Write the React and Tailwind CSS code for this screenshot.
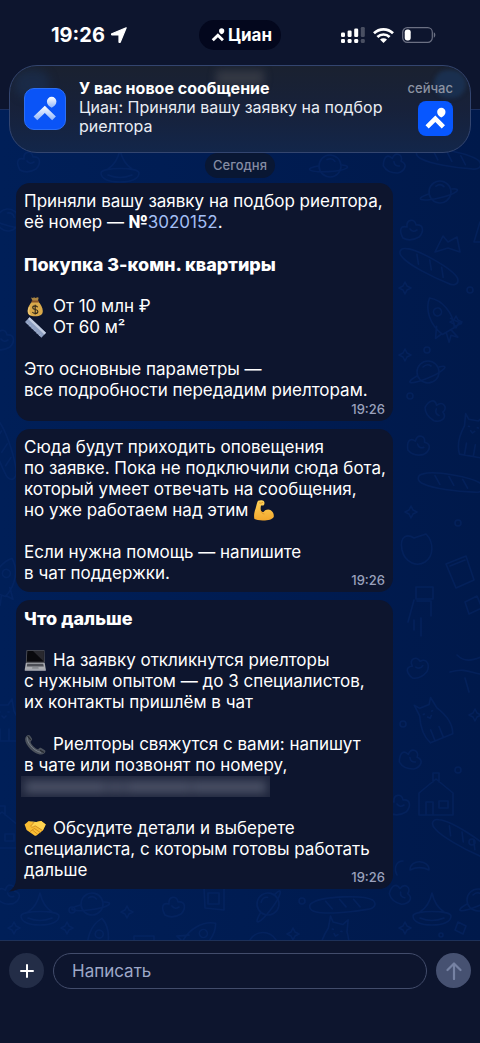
import React from 'react';

function CianMark({ className, from = '#ffffff', to = '#ffffff', id }) {
  return (
    <svg viewBox="0 0 42 42" className={className} aria-hidden="true">
      <defs>
        <linearGradient id={id} x1="0" y1="0" x2="0" y2="1">
          <stop offset="0" stopColor={from} />
          <stop offset="1" stopColor={to} />
        </linearGradient>
      </defs>
      <path
        fill={`url(#${id})`}
        d="M28 8.200a5 5 0 0 1 5 5c0 3-2.200 5-5 6.600-2.800-1.600-5-3.600-5-6.600a5 5 0 0 1 5-5z"
      />
      <path fill={`url(#${id})`} d="M20.800 17.500 32.400 29l-3.900 3.900-7.700-7.600-7.900 7.600L9 29z" />
    </svg>
  );
}

function MoneyBag() {
  return (
    <svg viewBox="0 0 22 21" role="img" aria-label="Мешок денег" className="mr-[7px] inline-block h-[21px] w-[22px] align-top">
      <path d="M7 1.500 9 2l1-.8 1.600.8 1.700-.8 1.400.6L13.800 5H8.600z" fill="#a98442" />
      <path d="M8.300 5.500h5.800c2.600 2.500 4.700 6 4.700 9.500 0 3.800-2.400 5.300-7.600 5.300s-7.600-1.500-7.600-5.300c0-3.500 2.100-7 4.700-9.500z" fill="#d9a94b" />
      <path d="M5.500 11c-1.200 3-1 6.500 1 8" stroke="#efc873" strokeWidth="1.400" fill="none" />
      <rect x="7.500" y="4.500" width="7.400" height="1.900" rx=".9" fill="#8a5428" />
      <path d="M13.700 11.200c-.5-.9-1.400-1.300-2.500-1.300-1.500 0-2.500.7-2.500 1.800 0 2.600 5.200 1.100 5.200 3.700 0 1.200-1.100 2-2.700 2-1.300 0-2.300-.5-2.800-1.500M11.200 8.700v9.900" stroke="#33291a" strokeWidth="1.100" fill="none" />
    </svg>
  );
}

function Ruler() {
  return (
    <svg viewBox="0 0 22 21" role="img" aria-label="Линейка" className="mr-[7px] inline-block h-[21px] w-[22px] align-top">
      <path d="M5.600.2 22 15.800 17.400 20.800 1 5z" fill="#8fa0c2" />
      <path d="M5.600.2 22 15.800 20.500 17.400 4.100 1.900z" fill="#c3cde2" />
      <path d="m2.800 7 1.300-1.400m1.200 3.800 1.300-1.400m1.200 3.800 1.300-1.400m1.200 3.800 1.300-1.400m1.200 3.800 1.300-1.400m1.200 3.600 1.300-1.400" stroke="#c0cae0" strokeWidth=".6" />
    </svg>
  );
}

function Biceps() {
  return (
    <svg viewBox="0 0 22 21" role="img" aria-label="Сила" className="ml-[5px] inline-block h-[21px] w-[22px] align-top">
      <defs>
        <linearGradient id="arm" x1="0" y1="0" x2="0" y2="1">
          <stop offset="0" stopColor="#ffd45c" />
          <stop offset="1" stopColor="#f3a82c" />
        </linearGradient>
      </defs>
      <path
        d="M5 .8C6.800-.1 9.800-.1 10.800 1c.8.900.9 2.600.3 3.700-.5.900-2.100 1-3.100.8-.5 2.200-.5 4.200.2 5.800.8.8 1.700 1 2.600.5 1.500-2.400 4.800-2.900 7-1.500 2.300 1.500 3.200 4 3 6.200-.3 2.100-4 3.700-8.800 3.900C7 20.700 3.500 20 1.300 18.800c-.6-3.700.1-7 1.300-10.200C3.400 6 3.700 2.800 5 .8z"
        fill="url(#arm)"
      />
      <path d="M6.300 2.900c1.200.5 2.500.4 3.500-.6M8.200 11.300c.4 1.600 1.400 2.500 2.800 2.600" stroke="#d98b20" strokeWidth=".8" fill="none" strokeLinecap="round" />
    </svg>
  );
}

function Laptop() {
  return (
    <svg viewBox="0 0 22 21" role="img" aria-label="Ноутбук" className="mr-[7px] inline-block h-[21px] w-[22px] align-top">
      <path d="M2.500.2h18l.2 12.700H1.800z" fill="#55565b" />
      <path d="M3.300 1h16.500v10.800H2.700z" fill="#09090d" />
      <path d="m9 1 10.800 10.400V1z" fill="#29292f" />
      <path d="M1.800 12.900h18.900l1.100 6.400H.8z" fill="#a9abb0" />
      <path d="M3.200 13.700h16l.6 2.700h-17z" fill="#4c4e55" />
      <path d="M8.400 17h6l.3 1.800H8z" fill="#888b91" />
      <path d="M.8 19.300h21v1.300H.8z" fill="#d5d6d9" />
    </svg>
  );
}

function Receiver() {
  return (
    <svg viewBox="0 0 22 21" role="img" aria-label="Телефон" className="mr-[7px] inline-block h-[21px] w-[22px] align-top">
      <path
        d="M2.200 2.200C3.500.9 5 .4 5.900 1.500l2 3.100c.6 1-.1 2-1.200 2.800-.7.600 1 3.400 2.900 5.200 1.800 1.700 4 3.100 4.700 2.600.9-1 1.800-1.800 2.900-1.200l3.700 2.200c1 .8.600 2.200-.8 3.400-2.100 1.700-5.500 1.100-9-.8-3.500-2-6.700-5.200-8.600-8.700C.8 7 .6 4 2.200 2.200z"
        fill="#4b515b"
      />
      <path d="M3.700 2.400c-1.200 2.400.4 6.100 2.800 9 2.700 3.400 6.400 6.300 10.400 7" stroke="#7b828c" strokeWidth=".9" fill="none" />
      <path d="m3.600 2.200 3.100 3.700M16 16.200l3.900 2.200" stroke="#23272e" strokeWidth="1.200" />
    </svg>
  );
}

function Handshake() {
  return (
    <svg viewBox="0 0 22 21" role="img" aria-label="Рукопожатие" className="mr-[7px] inline-block h-[21px] w-[22px] align-top">
      <path d="M.6 6.500 4.700 3l5.200 1.500L12.300 4l4.900-1L21.700 6.600l-2.900 6-6.700 5.100c-.7.400-1.400 0-2-.5L2.600 11.900z" fill="#f9bd33" />
      <path d="m4.700 3 5.200 1.500-3.300 3.700c.8 1.300 2.800 1.200 4.500-.4l7.700 4.800 2.900-6L17.200 3l-4.900 1z" fill="#ffd34f" />
      <path d="m9.900 4.500-3.300 3.700c.8 1.300 2.800 1.200 4.500-.4l7.500 4.700M10.500 10.500l5.700 4M8.700 12.200l4.800 4M6.500 13.300l3-2.200" stroke="#c9821c" strokeWidth=".8" fill="none" strokeLinecap="round" />
    </svg>
  );
}

function Planet({ x, y, r = 0 }) {
  return (
    <g transform={`translate(${x} ${y}) rotate(${r})`}>
      <circle r="11" />
      <path d="M-11 4c-14 8-6 9 11 2s22-14 11-11M-5-5q4-4 8-1" />
    </g>
  );
}
function Candy({ x, y, r = 0 }) {
  return (
    <g transform={`translate(${x} ${y}) rotate(${r})`}>
      <path d="M-10 8c-4-7-3-13 4-11-1-8 8-9 9-2 8-1 8 7 3 12-5 3-11 4-16 1zM-3-1q3 4 7 1" />
    </g>
  );
}
function Baguette({ x, y, r = 0 }) {
  return (
    <g transform={`translate(${x} ${y}) rotate(${r})`}>
      <path d="M-30-6c10-5 50-4 59 2 5 5 0 9-6 9-18 2-42 2-51-1-8-2-8-8-2-10zM-18-6l6 8M-4-7l6 8M10-6l6 8" />
    </g>
  );
}
function Rocket({ x, y, r = 0 }) {
  return (
    <g transform={`translate(${x} ${y}) rotate(${r})`}>
      <path d="M-7 15c-6-14-3-30 7-38 10 8 13 24 7 38zM-8 5l-7 10 8-1M8 5l7 10-8-1M-3 16l-2 9 5-5 5 5-2-9" />
      <circle cy="-7" r="4" />
    </g>
  );
}
function House({ x, y, r = 0 }) {
  return (
    <g transform={`translate(${x} ${y}) rotate(${r})`}>
      <path d="M-17-4 0-18l17 14v22h-34zM-10 18V5h7v13M3 4h9v7H3zM-3-15v-9h6v9" />
    </g>
  );
}
function Bowl({ x, y, r = 0 }) {
  return (
    <g transform={`translate(${x} ${y}) rotate(${r})`}>
      <path d="M-19 5c0-6 38-6 38 0s-8 9-19 9-19-3-19-9zM-12 1C-6-3-2-9 0-18c2 9 6 15 12 19M-12 7q12 5 24 0" />
    </g>
  );
}
function Cat({ x, y, r = 0 }) {
  return (
    <g transform={`translate(${x} ${y}) rotate(${r})`}>
      <path d="M-10-20l4 5h10l4-6 2 12c6 10 9 20 5 30h-24c-5-10-3-20 0-29zM-4 21V9M5 21V9M-5-8h1M4-8h1M-2-4l2 2 2-2" />
    </g>
  );
}
function Sparkle({ x, y }) {
  return <path d={`M${x} ${y - 6}l2 4 4 2-4 2-2 4-2-4-4-2 4-2z`} />;
}

function Wallpaper() {
  return (
    <svg
      viewBox="0 0 480 831"
      preserveAspectRatio="xMinYMin slice"
      className="absolute inset-0 h-full w-full text-[#0a2c70]"
      fill="none"
      stroke="currentColor"
      strokeWidth="1.600"
      strokeLinecap="round"
      strokeLinejoin="round"
      opacity=".4"
      aria-hidden="true"
    >
      <Candy x={30} y={52} />
      <Bowl x={120} y={58} />
      <Planet x={330} y={56} r={20} />
      <Candy x={396} y={54} r={30} />
      <Baguette x={450} y={50} r={10} />
      <Planet x={440} y={82} r={10} />
      <Candy x={413} y={120} />
      <path d="M435 142l8-16 5 6 9-5 3 15-12-4zM474 132l6-20M475 132h6" />
      <Baguette x={430} y={158} r={28} />
      <Rocket x={441} y={208} r={-30} />
      <Planet x={428} y={262} />
      <Candy x={437} y={302} r={60} />
      <Candy x={420} y={336} r={20} />
      <Cat x={472} y={325} r={10} />
      <Baguette x={452} y={374} r={8} />
      <path d="M402 440c-3-15 6-16 12-12l12-4c8 8 8 22-1 28-8 5-20 1-23-12zM446 454l20-8 8 24-18 8zM450 456l15-6" />
      <path d="M416 477h17v12h-17zM414 490l-6 22M417 491h14v15M414 510v10M421 508v18M465 492l12-6 5 12-13 6z" />
      <Candy x={419} y={557} r={-20} />
      <path d="M457 545c8 8 16 5 24 2M450 562c14-4 20 0 30 2M465 568l4 14" />
      <Cat x={431} y={610} r={-22} />
      <Candy x={412} y={650} r={30} />
      <House x={436} y={687} />
      <Candy x={400} y={695} />
      <Baguette x={462} y={730} r={30} />
      <path d="M397 765c-4-8 0-14 6-14M410 760c0-12 20-10 19 0-6-3-13-3-19 0z" />
      <Planet x={8} y={110} r={40} />
      <Candy x={4} y={230} />
      <Baguette x={2} y={340} r={70} />
      <Rocket x={4} y={470} r={20} />
      <Cat x={4} y={610} />
      <House x={2} y={720} />
      <Candy x={10} y={785} r={20} />
      <Bowl x={40} y={801} />
      <Planet x={92} y={794} r={15} />
      <Rocket x={98} y={831} r={10} />
      <Candy x={175} y={797} />
      <path d="M204 778h20v22l-19-2zM208 783h11v11h-11z" />
      <Planet x={268} y={794} r={-30} />
      <Baguette x={344} y={796} r={-4} />
      <Candy x={402} y={785} r={45} />
      <Bowl x={432} y={801} />
      <Planet x={478} y={790} />
      <Rocket x={198} y={828} r={50} />
      <Cat x={335} y={828} r={15} />
      <path d="M134 826h20v12h-20zM250 830c6-10 20-10 26 0M458 812l8 4-3 8-8-4z" />
      <Sparkle x={405} y={178} />
      <Sparkle x={405} y={245} />
      <Sparkle x={456} y={212} />
      <Sparkle x={411} y={402} />
      <Sparkle x={475} y={605} />
      <Sparkle x={14} y={818} />
      <Sparkle x={67} y={818} />
      <Sparkle x={127} y={802} />
      <Sparkle x={293} y={824} />
      <Sparkle x={405} y={818} />
      <circle cx="427" cy="240" r="3" />
      <circle cx="410" cy="286" r="3" />
      <circle cx="470" cy="180" r="3" />
      <circle cx="458" cy="413" r="3" />
      <circle cx="403" cy="614" r="3" />
      <circle cx="458" cy="660" r="3" />
      <circle cx="472" cy="732" r="3" />
      <circle cx="302" cy="791" r="3" />
      <circle cx="72" cy="800" r="3" />
      <circle cx="441" cy="825" r="2" />
    </svg>
  );
}

function StatusBar() {
  return (
    <div className="grid h-[70px] grid-cols-[1fr_82px_1fr] items-center text-white">
      <div className="flex items-center gap-[6px] pl-[51px]">
        <span className="text-[20px] font-bold leading-6">19:26</span>
        <svg viewBox="0 0 16 16" className="h-4 w-4" aria-hidden="true">
          <path d="M15.200.8 9.200 15.200Q8.400 16.200 8 14.800V8H1.200Q-.2 7.600.8 6.800z" fill="#fff" stroke="#fff" strokeWidth="1.200" strokeLinejoin="round" />
        </svg>
      </div>
      <div className="flex h-[30px] items-center justify-center rounded-full bg-[#03071d]">
        <CianMark id="mark-pill" className="-mx-px h-[22px] w-[22px]" />
        <span className="text-[17px] font-bold leading-6">Циан</span>
      </div>
      <div className="flex items-center justify-end gap-2 pr-[44px]">
        <svg viewBox="0 0 24 16" className="h-4 w-6" fill="#fff" aria-hidden="true">
          <rect x="0" y="12" width="4" height="4" rx="1.300" />
          <rect x="6.600" y="12" width="4" height="4" rx="1.300" />
          <rect x="13.200" y="12" width="4" height="4" rx="1.300" />
          <rect x="19.800" y="12" width="4" height="4" rx="1.300" opacity=".25" />
          <rect x="0" y="5.500" width="4" height="4.500" rx="1.300" />
          <rect x="6.600" y="3.500" width="4" height="6.500" rx="1.300" />
          <rect x="13.200" y="1.500" width="4" height="8.500" rx="1.300" />
          <rect x="19.800" y="0" width="4" height="10" rx="1.300" opacity=".25" />
        </svg>
        <svg viewBox="0 0 21 15" className="h-[15px] w-[21px]" fill="none" stroke="#fff" strokeWidth="2.700" aria-hidden="true">
          <path d="M1 5.300a13.500 13.500 0 0 1 19 0" />
          <path d="M4.400 9a8.700 8.700 0 0 1 12.200 0" />
          <path d="M10.500 15 7 11.600a5 5 0 0 1 7 0z" fill="#fff" stroke="none" />
        </svg>
        <svg viewBox="0 0 34 16" className="h-4 w-[34px]" aria-hidden="true">
          <rect x=".7" y=".7" width="29.600" height="14.600" rx="4.600" fill="none" stroke="#6b7083" strokeWidth="1.200" />
          <rect x="2.700" y="2.600" width="6" height="10.800" rx="2.600" fill="#fff" />
          <path d="M31.800 5.300c2 .7 2 4.700 0 5.400z" fill="#6b7083" />
        </svg>
      </div>
    </div>
  );
}

function Notification() {
  return (
    <section
      aria-label="Уведомление"
      className="absolute inset-x-[9px] top-[65px] z-10 flex h-[88px] items-center overflow-hidden rounded-[28px] border border-[#33456f] bg-linear-to-b from-[#1a2130] via-[#17213a] to-[#12264a] pl-[14px] pr-[17px]"
    >
      <div className="absolute left-1 top-1 h-7 w-9 rounded-full bg-[#1b3154] opacity-60 blur-[5px]" />
      <div className="absolute left-1/2 top-1 h-4 w-12 -translate-x-[24px] bg-[#3a3e48] opacity-80 blur-[4px]" />
      <div className="absolute right-1 top-1 h-7 w-8 rounded-full bg-[#1b3457] opacity-80 blur-[2px]" />
      <div className="relative h-[42px] w-[42px] shrink-0 rounded-[10px] border border-[#2c6ff5] bg-[#0a54f7]">
        <CianMark id="mark-large" from="#ffffff" to="#8fb4fb" className="h-full w-full" />
      </div>
      <div className="relative -mt-1 ml-[13px] min-w-0 flex-1 text-[16px] leading-[19px] text-[#e9edf4]">
        <h2 className="font-bold text-white">У вас новое сообщение</h2>
        <p>
          Циан: Приняли вашу заявку на подбор
          <br />
          риелтора
        </p>
      </div>
      <div className="relative -mt-1 flex flex-col items-end gap-1">
        <span className="text-[13px] font-medium leading-[18px] text-[#8c93a2]">сейчас</span>
        <div className="h-[35px] w-[35px] rounded-[8px] bg-[#0757ff]">
          <CianMark id="mark-small" className="h-full w-full" />
        </div>
      </div>
    </section>
  );
}

function Time() {
  return <time className="mr-1 text-[13px] font-medium leading-4 text-[#9aa1bd]">19:26</time>;
}

function Bubble({ children, footer, tail = false }) {
  return (
    <article
      className={`relative w-[377px] max-w-full bg-[#0d152e] pb-1 pl-2 pr-1 pt-2 ${tail ? 'rounded-[14px] rounded-bl-none' : 'rounded-[14px]'}`}
    >
      {children}
      <div className="flex items-end justify-between">
        {footer ? <p className="pb-1">{footer}</p> : <span />}
        <Time />
      </div>
      {tail && (
        <svg viewBox="0 0 10 14" className="absolute -left-[7px] bottom-[-3px] h-[14px] w-[10px]" aria-hidden="true">
          <path d="M7 0h3v11C7 12 3 13.500 0 13.500 5 10 7 6 7 0z" fill="#0d152e" />
        </svg>
      )}
    </article>
  );
}

export default function App() {
  return (
    <div className="relative flex min-h-screen flex-col bg-[#0d152e] font-['Inter','Noto_Sans',sans-serif]">
      <header className="h-[110px] border-b border-[#1b2f5f]">
        <StatusBar />
      </header>

      <Notification />

      <main className="relative flex-1 bg-linear-to-r from-[#001f58] via-[#001c52] to-[#00194b]">
        <Wallpaper />
        <div className="relative flex flex-col gap-2 px-4 pb-12 pt-[43px] text-[17px] leading-[21px] text-white">
          <div className="-mb-[3px] flex justify-center">
            <span className="rounded-full bg-[#091733] px-2 text-[13px] font-medium leading-[25px] text-[#858ca3]">Сегодня</span>
          </div>
          <Bubble>
            <p>
              Приняли вашу заявку на подбор риелтора,
              <br />
              её номер — <b className="font-black">№</b>
              <a href="#3020152" className="text-[#a3bff5]">3020152</a>.
            </p>
            <h3 className="mt-[21px] text-[18px] font-extrabold">Покупка 3-комн. квартиры</h3>
            <p className="mt-[21px]">
              <MoneyBag />От 10 млн ₽
              <br />
              <Ruler />От 60 м²
            </p>
            <p className="mt-[21px]">
              Это основные параметры —
              <br />
              все подробности передадим риелторам.
            </p>
          </Bubble>

          <Bubble footer={<>Если нужна помощь — напишите<br />в чат поддержки.</>}>
            <p className="mb-[21px]">
              Сюда будут приходить оповещения
              <br />
              по заявке. Пока не подключили сюда бота,
              <br />
              который умеет отвечать на сообщения,
              <br />
              но уже работаем над этим<Biceps />
            </p>
          </Bubble>

          <Bubble tail footer="дальше">
            <h3 className="text-[18px] font-extrabold">Что дальше</h3>
            <p className="mt-[21px]">
              <Laptop />На заявку откликнутся риелторы
              <br />
              с нужным опытом — до 3 специалистов,
              <br />
              их контакты пришлём в чат
            </p>
            <p className="mt-[21px]">
              <Receiver />Риелторы свяжутся с вами: напишут
              <br />
              в чате или позвонят по номеру,
            </p>
            <div className="-ml-[3px] mb-[21px] h-[21px] w-[249px] overflow-hidden bg-[#1f263d]">
              <div className="flex h-full items-center gap-px px-1 blur-[5px]">
                <span className="h-3 w-20 bg-[#4b5166]" />
                <span className="h-3 w-5 bg-[#454b60]" />
                <span className="h-3 w-16 bg-[#4b5166]" />
                <span className="h-3 flex-1 bg-[#4b5166]" />
              </div>
            </div>
            <p>
              <Handshake />Обсудите детали и выберете
              <br />
              специалиста, с которым готовы работать
            </p>
          </Bubble>
        </div>
      </main>

      <footer className="flex h-[103px] items-start gap-[9px] border-t border-[#1e3158] px-[9px] pt-[12px]">
        <button type="button" aria-label="Добавить" className="flex h-[35px] w-[35px] shrink-0 items-center justify-center rounded-full bg-[#232d47]">
          <svg viewBox="0 0 14 14" className="h-[14px] w-[14px]" stroke="#fff" strokeWidth="2" strokeLinecap="round" aria-hidden="true">
            <path d="M7 1v12M1 7h12" />
          </svg>
        </button>
        <input
          type="text"
          aria-label="Сообщение"
          placeholder="Написать"
          className="h-[36px] min-w-0 flex-1 rounded-full border border-[#424c6b] bg-transparent px-[18px] text-[17px] text-white outline-none placeholder:text-[#9ea8c8]"
        />
        <button type="button" aria-label="Отправить" className="flex h-[35px] w-[35px] shrink-0 items-center justify-center rounded-full bg-[#465171]">
          <svg viewBox="0 0 16 18" className="h-[18px] w-4" fill="none" stroke="#7682a3" strokeWidth="2.200" strokeLinecap="round" strokeLinejoin="round" aria-hidden="true">
            <path d="M8 17V2M1.500 8 8 1.500 14.500 8" />
          </svg>
        </button>
      </footer>
    </div>
  );
}
